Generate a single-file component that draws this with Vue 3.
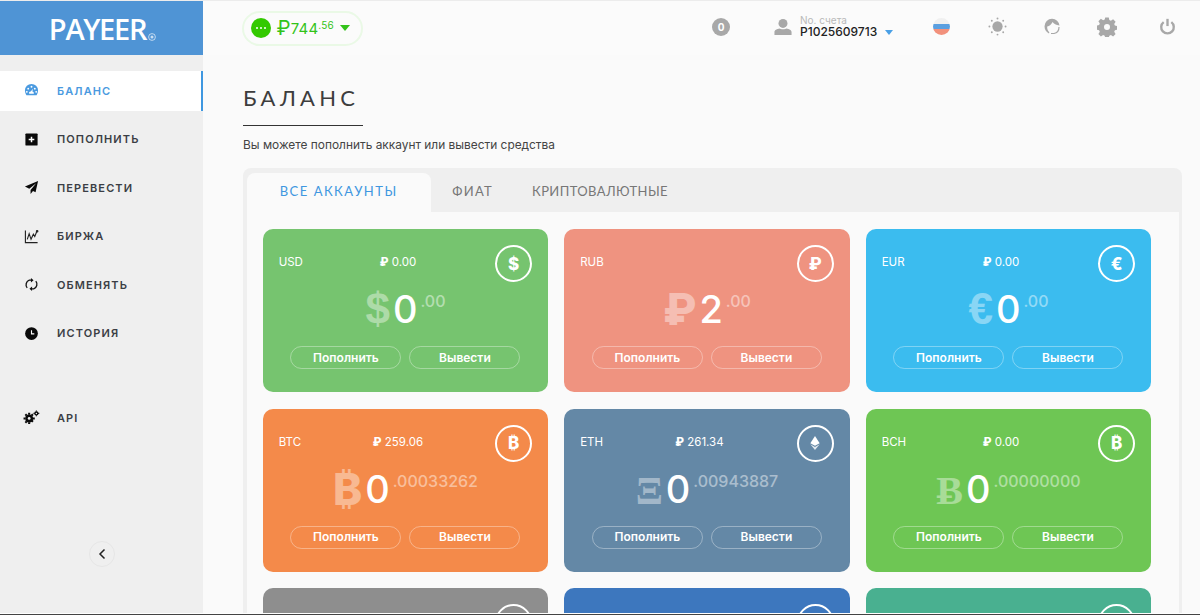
<script setup>
const nav = [
  { label: 'ПОПОЛНИТЬ', icon: 'plus' },
  { label: 'ПЕРЕВЕСТИ', icon: 'send' },
  { label: 'БИРЖА', icon: 'chart' },
  { label: 'ОБМЕНЯТЬ', icon: 'swap' },
  { label: 'ИСТОРИЯ', icon: 'clock' },
]
const cards = [
  { code: 'USD', rub: '0.00', sym: '$', whole: '0', frac: '.00', color: '#76c46f', badge: 'usd', cls: 'lib' },
  { code: 'RUB', rub: '', sym: '₽', whole: '2', frac: '.00', color: '#ef9380', badge: 'rub', cls: 'sans' },
  { code: 'EUR', rub: '0.00', sym: '€', whole: '0', frac: '.00', color: '#3bbcef', badge: 'eur', cls: 'lib' },
  { code: 'BTC', rub: '259.06', sym: '₿', whole: '0', frac: '.00033262', color: '#f48a4a', badge: 'btc', cls: 'sans' },
  { code: 'ETH', rub: '261.34', sym: 'Ξ', whole: '0', frac: '.00943887', color: '#6488a6', badge: 'eth', cls: 'serif' },
  { code: 'BCH', rub: '0.00', sym: 'Ƀ', whole: '0', frac: '.00000000', color: '#6ec654', badge: 'btc', cls: 'serif' },
  { code: '', rub: '', sym: '', whole: '', frac: '', color: '#8e8e8e', badge: 'none', cls: '' },
  { code: '', rub: '', sym: '', whole: '', frac: '', color: '#3d77be', badge: 'none', cls: '' },
  { code: '', rub: '', sym: '', whole: '', frac: '', color: '#49b090', badge: 'none', cls: '' },
]
</script>

<template>
  <div class="page">
    <div class="frame">
      <aside class="side">
        <div class="logo"><span class="logo-word">PAYEER</span><svg class="logo-reg" viewBox="0 0 8 8"><circle cx="4" cy="4" r="3.400" fill="none" stroke="#fff" stroke-width=".9" opacity=".7"/><circle cx="4" cy="4" r="1.500" fill="#fff" opacity=".7"/></svg></div>
        <nav class="menu">
          <a class="item active">
            <svg class="ico" viewBox="0 0 16 16"><path fill="#4a9ae0" fill-rule="evenodd" d="M8 1a7 7 0 0 1 7 7c0 2-.8 3.700-1.600 5H2.600C1.800 11.700 1 10 1 8a7 7 0 0 1 7-7Zm0 2a1 1 0 1 0 0 2 1 1 0 0 0 0-2ZM4.500 5a1 1 0 1 0 0 2 1 1 0 0 0 0-2Zm7 0a1 1 0 1 0 0 2 1 1 0 0 0 0-2ZM3 8.400a1 1 0 1 0 0 2 1 1 0 0 0 0-2Zm10 0a1 1 0 1 0 0 2 1 1 0 0 0 0-2ZM9.600 6 7.200 9a1.600 1.600 0 0 0-1.600 2.400h4.800A1.600 1.600 0 0 0 8.800 9.200Z"/></svg>
            <span>БАЛАНС</span>
          </a>
          <a v-for="n in nav" :key="n.label" class="item">
            <svg class="ico" viewBox="0 0 16 16">
              <g v-if="n.icon === 'plus'"><rect x="1.500" y="1.500" width="13" height="13" rx="1" fill="#0a0a0a"/><path d="M8 5v6M5 8h6" stroke="#fff" stroke-width="1.600"/></g>
              <path v-else-if="n.icon === 'send'" fill="#0a0a0a" d="M15 1 1 7l4.600 2.200L13 3.400 7 10.600V15l2.600-3.200 2.700 1.300Z"/>
              <g v-else-if="n.icon === 'chart'" fill="none" stroke="#222" stroke-width="1.200"><path d="M1.500 1.500v13h13"/><path d="M3.500 11 5.500 5 7.500 11 10 5.500 11.500 8 13.500 3"/><circle cx="14" cy="2.400" r=".8" fill="#222"/></g>
              <g v-else-if="n.icon === 'swap'" fill="none" stroke="#111" stroke-width="1.400"><path d="M3.400 11.600A5.200 5.200 0 0 1 5.600 3.400h2.200"/><path d="M12.600 4.400a5.200 5.200 0 0 1-2.200 8.200H8.200"/><path fill="#111" stroke="none" d="M7.400 1 10.200 3.400 7.400 5.800ZM8.600 10.200 5.800 12.600 8.600 15Z"/></g>
              <g v-else><circle cx="8" cy="8" r="6.800" fill="#0a0a0a"/><path d="M8 4.400V8.400H11" stroke="#fff" stroke-width="1.200" fill="none"/></g>
            </svg>
            <span>{{ n.label }}</span>
          </a>
          <a class="item api">
            <svg class="ico" viewBox="0 0 18 16"><g fill="#0a0a0a"><circle cx="6.500" cy="9" r="4.200"/><path d="M5.400 3h2.200v2H5.400ZM5.400 13h2.200v2H5.400ZM.5 7.900h2v2.200h-2ZM10.500 7.900h2v2.200h-2ZM1.700 5.200l1.500-1.500 1.400 1.400-1.500 1.500ZM8.400 11.900l1.500-1.500 1.400 1.400-1.500 1.500ZM1.700 12.800l1.400-1.400 1.500 1.500-1.400 1.400ZM8.400 5.100l1.400-1.400 1.500 1.500-1.400 1.400Z"/><circle cx="14.200" cy="3.600" r="2.300"/><path d="M13.600.5h1.200v1.200h-1.200ZM13.600 5.500h1.200v1.200h-1.200ZM11.100 3h1.200v1.200h-1.200ZM16.100 3h1.200v1.200h-1.200Z"/></g><circle cx="6.500" cy="9" r="1.500" fill="#efefef"/><circle cx="14.200" cy="3.600" r=".8" fill="#efefef"/></svg>
            <span>API</span>
          </a>
        </nav>
        <div class="collapse-row">
          <button class="collapse"><svg viewBox="0 0 10 12" width="10" height="12"><path d="M7.500 1.500 3 6l4.500 4.500" fill="none" stroke="#222" stroke-width="1.500"/></svg></button>
        </div>
      </aside>

      <div class="main">
        <header class="top">
          <div class="wallet">
            <span class="wallet-dot"><i></i><i></i><i></i></span>
            <span class="wallet-sum"><b>₽</b>744<sup>.56</sup></span>
            <span class="wallet-caret"></span>
          </div>
          <div class="top-right">
            <span class="count">0</span>
            <div class="account">
              <svg class="user" viewBox="0 0 20 20"><circle cx="10" cy="6" r="5" fill="#a8a8a8"/><path d="M0.500 19v-3.500c0-2 3-3.500 5.500-3.800 1.500 1 6.500 1 8 0 2.500.3 5.500 1.800 5.500 3.800V19Z" fill="#a8a8a8"/></svg>
              <div class="acc-text"><small>No. счета</small><strong>P1025609713</strong></div>
              <span class="acc-caret"></span>
            </div>
            <span class="flag"><i></i><i></i><i></i></span>
            <svg class="tico sun" viewBox="0 0 20 20"><g fill="#a8a8a8"><circle cx="10" cy="10" r="5.400"/><circle cx="10" cy="1.500" r="1"/><circle cx="10" cy="18.500" r="1"/><circle cx="1.500" cy="10" r="1"/><circle cx="18.500" cy="10" r="1"/><circle cx="4" cy="4" r="1"/><circle cx="16" cy="4" r="1"/><circle cx="4" cy="16" r="1"/><circle cx="16" cy="16" r="1"/></g></svg>
            <svg class="tico head" viewBox="0 0 16 18"><path fill="#a8a8a8" d="M8 .8A7.500 7.500 0 0 0 .5 8.300c0 3.400 2 6 4.500 7.100l.3-1.200C3.600 12.800 3 10.500 3.200 8.600 5.500 8 7.500 6.300 8.600 4c1.200 1.800 3.400 3.200 6.900 3.600A7.500 7.500 0 0 0 8 .8Z"/><path fill="none" stroke="#a8a8a8" stroke-width="1.200" d="M15 9c0 3.500-2 6-5 6.500H7"/></svg>
            <svg class="tico gear" viewBox="0 0 20 20"><path fill="#a8a8a8" fill-rule="evenodd" d="M8.200.5h3.600l.5 2.500 1.600.7 2.200-1.400 2.500 2.500-1.400 2.200.7 1.600 2.100.5v3.600l-2.100.5-.7 1.600 1.400 2.200-2.500 2.500-2.200-1.400-1.600.7-.5 2.100H8.200l-.5-2.100-1.600-.7-2.200 1.400-2.500-2.500 1.400-2.200-.7-1.600-2.100-.5V8.600l2.100-.5.7-1.600-1.400-2.200 2.500-2.500 2.200 1.400 1.600-.7ZM10 7a3 3 0 1 0 0 6 3 3 0 0 0 0-6Z"/></svg>
            <svg class="tico power" viewBox="0 0 20 20"><path fill="none" stroke="#a8a8a8" stroke-width="2.800" d="M5.500 4.800a7.400 7.400 0 1 0 9 0"/><path stroke="#a8a8a8" stroke-width="2.800" d="M10 1v8.500"/></svg>
          </div>
        </header>

        <main class="content">
          <h1>БАЛАНС</h1>
          <div class="rule"></div>
          <p class="lead">Вы можете пополнить аккаунт или вывести средства</p>

          <section class="panel">
            <div class="tabs">
              <a class="tab on">ВСЕ АККАУНТЫ</a>
              <a class="tab">ФИАТ</a>
              <a class="tab crypto">КРИПТОВАЛЮТНЫЕ</a>
            </div>
            <div class="grid">
              <article v-for="(c, i) in cards" :key="i" class="card" :style="{ background: c.color }">
                <div class="head-row">
                  <span class="code">{{ c.code }}</span>
                  <span class="rub"><template v-if="c.rub"><b>₽</b> {{ c.rub }}</template></span>
                  <span class="badge">
                    <template v-if="c.badge === 'usd'">$</template>
                    <template v-else-if="c.badge === 'rub'">₽</template>
                    <template v-else-if="c.badge === 'eur'">€</template>
                    <template v-else-if="c.badge === 'btc'">₿</template>
                    <svg v-else-if="c.badge === 'eth'" viewBox="0 0 12 18" width="10" height="14"><path fill="#fff" d="M6 0 0 9.200 6 12.600 12 9.200Z"/><path fill="#fff" opacity=".8" d="M0 10.600 6 18 12 10.600 6 14Z"/></svg>
                  </span>
                </div>
                <div class="amount" v-if="c.whole">
                  <span class="sym" :class="c.cls">{{ c.sym }}</span>
                  <span class="whole">{{ c.whole }}</span>
                  <span class="frac">{{ c.frac }}</span>
                </div>
                <div class="actions" v-if="c.whole">
                  <button>Пополнить</button>
                  <button>Вывести</button>
                </div>
              </article>
            </div>
          </section>
        </main>
      </div>
    </div>
  </div>
</template>

<style>
html, body { margin: 0; height: 100%; overflow: hidden; background: #fafafa; }
</style>

<style scoped>
* { box-sizing: border-box; }
.page {
  display: flex; width: 1200px; height: 615px; overflow: hidden;
  font-family: Inter, "Noto Sans", sans-serif; color: #333;
  border-top: 1px solid #ececec; border-bottom: 1px solid #444;
  background: #fafafa;
}
.frame { flex: 1; display: flex; min-width: 0; overflow: hidden; border-bottom: 1px solid #fff; }
.side { width: 203px; flex: none; background: #efefef; display: flex; flex-direction: column; }
.logo { height: 54px; background: #4f94d5; display: flex; align-items: center; justify-content: center; color: #fff; padding-left: 2px; }
.logo-word { font: 600 29px/1 "Open Sans", sans-serif; letter-spacing: -1.300px; }
.logo-reg { width: 8px; height: 8px; align-self: flex-end; margin: 0 0 14px 2px; }
.menu { display: flex; flex-direction: column; padding-top: 15.700px; }
.item { height: 40px; margin-bottom: 8.500px; display: flex; align-items: center; padding-left: 24px; font-size: 11px; font-weight: 600; letter-spacing: 1.100px; color: #3b3e45; }
.item span { margin-left: 18px; }
.item.active { background: #fff; color: #4a9ae0; border-right: 2px solid #3f97e0; }
.item.api { margin-top: 36px; padding-left: 23px; }
.item.api span { margin-left: 17px; }
.ico { width: 15px; height: 15px; flex: none; }
.api .ico { width: 17px; height: 15px; }
.collapse-row { margin-top: 94.500px; display: flex; justify-content: center; padding-left: 1px; }
.collapse { width: 26px; height: 26px; border-radius: 50%; border: 1px solid #e6e6e6; background: #efefef; padding: 0; display: flex; align-items: center; justify-content: center; }

.main { flex: 1; min-width: 0; display: flex; flex-direction: column; }
.top { height: 54px; flex: none; display: flex; align-items: center; justify-content: space-between; background: #fbfbfb; padding: 0 24px 0 38.500px; }
.wallet { display: flex; align-items: center; width: 121px; height: 35px; border: 2px solid #eaf9e6; border-radius: 18px; padding-left: 7px; color: #33c31a; }
.wallet-dot { width: 20px; height: 20px; border-radius: 50%; background: #33c900; display: flex; align-items: center; justify-content: center; gap: 2px; }
.wallet-dot i { width: 2px; height: 2px; background: #fff; border-radius: 50%; }
.wallet-sum { margin-left: 6px; font-size: 15px; letter-spacing: .2px; line-height: 1; white-space: nowrap; }
.wallet-sum b { font-weight: 400; font-size: 20px; vertical-align: -1px; }
.wallet-sum sup { font-size: 10px; vertical-align: 5px; line-height: 0; }
.wallet-caret { width: 0; height: 0; margin-left: 6px; border: 5px solid transparent; border-top: 6px solid #33c31a; border-bottom: 0; }
.top-right { display: flex; align-items: center; margin-bottom: 3px; }
.count { width: 18px; height: 18px; border-radius: 50%; background: #a8a8a8; color: #fff; font-size: 10px; font-weight: 700; display: flex; align-items: center; justify-content: center; margin-right: 44px; }
.account { display: flex; align-items: center; margin-right: 40px; }
.user { width: 18px; height: 18px; }
.acc-text { margin-left: 8px; display: flex; flex-direction: column; width: 76px; }
.acc-text small { font-size: 10px; line-height: 11px; color: #b9b9b9; }
.acc-text strong { font-size: 12px; line-height: 12px; font-weight: 500; color: #222; white-space: nowrap; }
.acc-caret { margin: 11px 0 0 9px; width: 0; height: 0; border: 4.500px solid transparent; border-top: 5px solid #4aa0e6; border-bottom: 0; }
.flag { width: 17px; height: 17px; border-radius: 50%; overflow: hidden; display: flex; flex-direction: column; margin-right: 38px; }
.flag i { flex: 1; }
.flag i:nth-child(1) { background: #f0f0f0; }
.flag i:nth-child(2) { background: #5a9fe0; }
.flag i:nth-child(3) { background: #f2917c; }
.tico { flex: none; }
.sun { width: 19px; height: 19px; margin-right: 37px; }
.head { width: 16px; height: 18px; margin-right: 37px; }
.gear { width: 20px; height: 20px; margin-right: 42px; }
.power { width: 17px; height: 17px; }

.content { flex: 1; min-height: 0; padding: 30px 18px 0 40px; }
h1 { margin: 0; font: 400 22px/26px Lato, "Open Sans", sans-serif; letter-spacing: 4.200px; color: #3d3d3d; }
.rule { width: 120px; height: 1px; background: #333; margin-top: 14px; }
.lead { margin: 11px 0 0; font-size: 11.900px; line-height: 16px; color: #444; }
.panel { margin-top: 15px; border-radius: 8px 8px 0 0; background: #efefef; padding: 5px 3.500px 0 3.700px; }
.tabs { display: flex; height: 39px; align-items: stretch; }
.tab { display: flex; align-items: center; justify-content: center; font: 400 13px/1 Lato, "Open Sans", sans-serif; letter-spacing: 1.300px; color: #777; padding: 0 19.500px 3px; }
.tab.crypto { letter-spacing: .4px; }
.tab.on { width: 184px; background: #fafafa; color: #3f97e0; border-radius: 8px 8px 0 0; padding: 0 0 3px; margin-right: 2px; letter-spacing: 1.500px; }
.grid { background: #fafafa; padding: 17px 27.300px 0 16px; display: grid; grid-template-columns: repeat(3, 1fr); column-gap: 16px; row-gap: 16.600px; }
.card { height: 163px; border-radius: 10px; padding: 16px 16px 0 16px; color: #fff; }
.head-row { display: flex; align-items: flex-start; height: 37px; }
.code { width: 60px; font-size: 11.500px; line-height: 35px; }
.rub { flex: 1; text-align: center; font-size: 11.500px; line-height: 35px; padding-right: 38px; }
.rub b { font-weight: 800; }
.badge { width: 37px; height: 37px; border: 2px solid #fff; border-radius: 50%; display: flex; align-items: center; justify-content: center; font-size: 17px; font-weight: 800; }
.amount { display: flex; justify-content: center; align-items: flex-start; height: 50px; margin-top: 2px; }
.sym { font-size: 44px; line-height: 50px; font-weight: 800; opacity: .4; margin-right: 3px; }
.sym.lib { font-family: "Liberation Sans", sans-serif; font-weight: 700; }
.sym.serif { font-family: "Liberation Serif", serif; font-weight: 700; font-size: 40px; line-height: 54px; }
.whole { font-size: 38px; line-height: 50px; font-weight: 500; }
.frac { font-size: 16px; line-height: 34px; font-weight: 500; opacity: .45; margin-left: 3px; }
.actions { display: flex; justify-content: center; gap: 8px; margin-top: 12px; }
.actions button { width: 111px; height: 23px; background: transparent; border: 1px solid rgba(255,255,255,.35); border-radius: 12px; color: #fff; font: 600 12px/1 Inter, sans-serif; padding: 0; }
</style>
